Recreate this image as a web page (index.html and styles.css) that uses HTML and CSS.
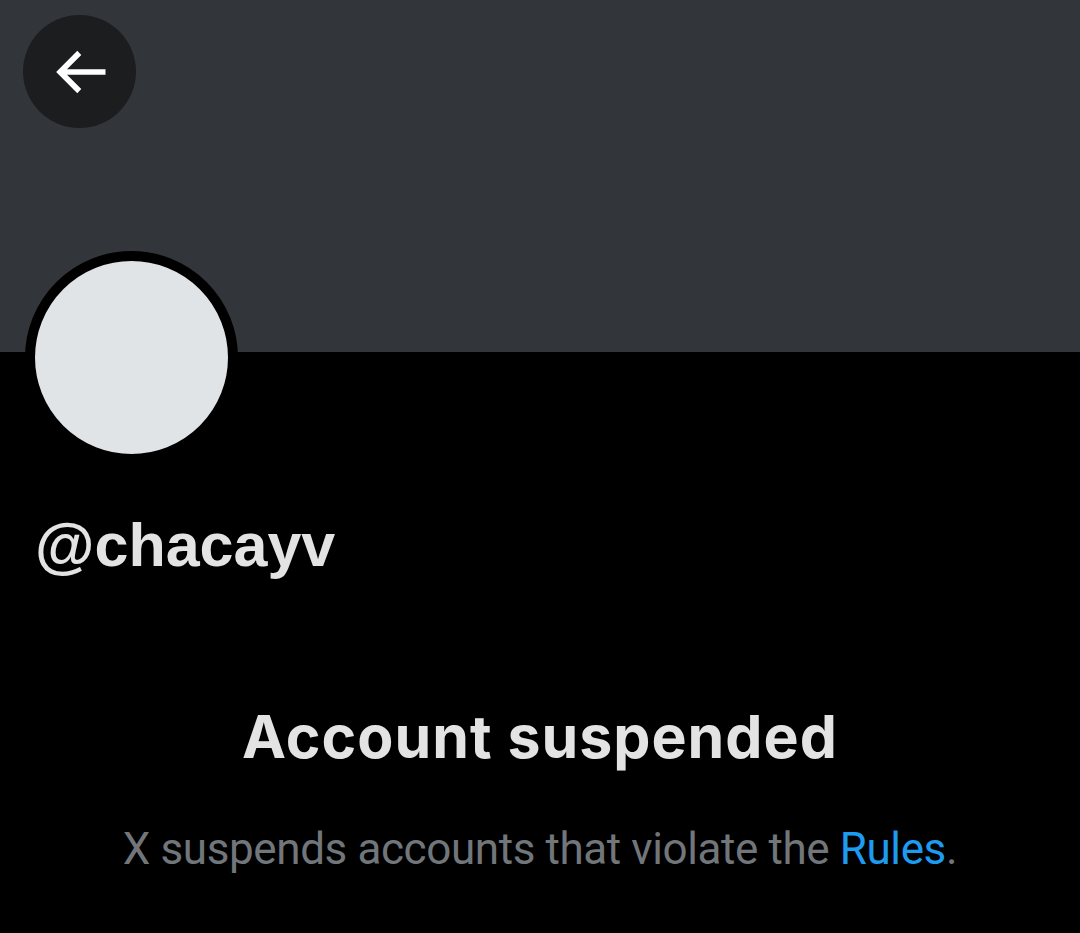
FILE: index.html
```html
<!DOCTYPE html>
<html lang="en">
<head>
    <meta charset="UTF-8">
    <meta name="viewport" content="width=device-width, initial-scale=1.0">
    <title>@chacayv</title>
    <link rel="stylesheet" href="styles.css">
</head>
<body>

    <!-- Banner -->
    <header class="banner">
        <button class="back-btn" aria-label="Back">
            <svg viewBox="0 0 24 24" width="68" height="68">
                <path d="M7.414 13l5.043 5.04-1.414 1.42L3.586 12l7.457-7.46 1.414 1.42L7.414 11H21v2H7.414z" fill="#fff"/>
            </svg>
        </button>
    </header>

    <!-- Perfil -->
    <div class="profile">
        <div class="avatar"></div>
        <div class="handle">@chacayv</div>
    </div>

    <!-- Mensaje -->
    <div class="notice">
        <h1>Account suspended</h1>
        <p>X suspends accounts that violate the <a href="#">Rules</a>.</p>
    </div>

</body>
</html>
```

FILE: styles.css
```css
/* Estilos generales */
body {
    margin: 0;
    padding: 0;
    background-color: #000;
    color: #e3e3e3;
    font-family: Roboto, "Liberation Sans", sans-serif;
}
.banner {
    height: 352px;
    background-color: #323539;
    padding: 15px 0 0 23px;
    box-sizing: border-box;
}
.back-btn {
    width: 113px;
    height: 113px;
    border-radius: 50%;
    border: none;
    background-color: #1b1d1f;
    display: flex;
    align-items: center;
    justify-content: center;
    padding: 0;
    cursor: pointer;
}
.profile {
    padding-left: 25px;
    margin-top: -101px;
}
.avatar {
    width: 193px;
    height: 193px;
    border-radius: 50%;
    background-color: #e0e4e7;
    border: 10px solid #000;
}
.handle {
    margin: 46px 0 0 10px;
    font-family: "Liberation Sans", Arial, sans-serif;
    font-size: 61px;
    font-weight: 700;
    line-height: 70px;
}
.notice {
    text-align: center;
    margin-top: 122px;
}
.notice h1 {
    margin: 0;
    font-family: Inter, Roboto, sans-serif;
    font-size: 59px;
    font-weight: 700;
    line-height: 70px;
    letter-spacing: 1px;
    color: #e3e3e3;
}
.notice p {
    margin: 52px 0 0;
    font-size: 44px;
    line-height: 50px;
    letter-spacing: -0.4px;
    color: #71767b;
}
.notice a {
    color: #1d9bf0;
    text-decoration: none;
}
```
